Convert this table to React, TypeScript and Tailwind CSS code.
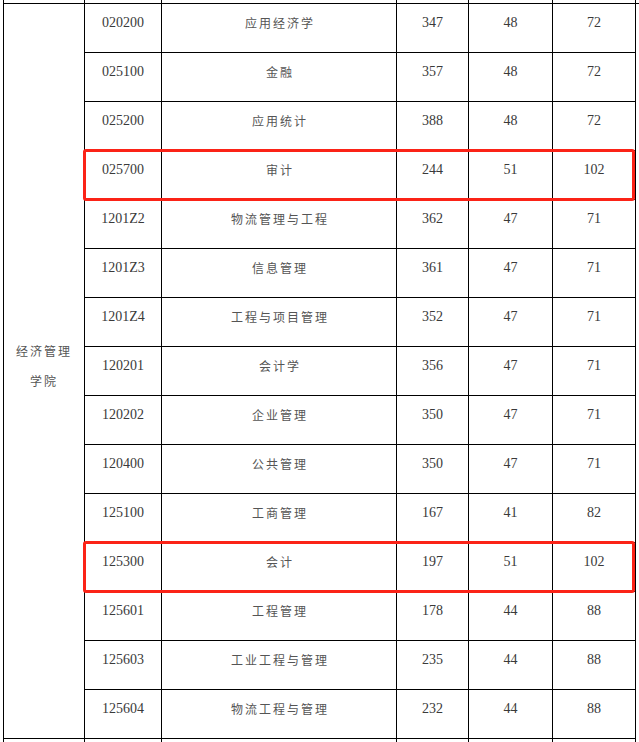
const cols = ["w-[81px]", "w-[77px]", "w-[235px]", "w-[72px]", "w-[84px]", "w-[83px]"]

const rows: [string, string, number, number, number][] = [
  ["020200", "应用经济学", 347, 48, 72],
  ["025100", "金融", 357, 48, 72],
  ["025200", "应用统计", 388, 48, 72],
  ["025700", "审计", 244, 51, 102],
  ["1201Z2", "物流管理与工程", 362, 47, 71],
  ["1201Z3", "信息管理", 361, 47, 71],
  ["1201Z4", "工程与项目管理", 352, 47, 71],
  ["120201", "会计学", 356, 47, 71],
  ["120202", "企业管理", 350, 47, 71],
  ["120400", "公共管理", 350, 47, 71],
  ["125100", "工商管理", 167, 41, 82],
  ["125300", "会计", 197, 51, 102],
  ["125601", "工程管理", 178, 44, 88],
  ["125603", "工业工程与管理", 235, 44, 88],
  ["125604", "物流工程与管理", 232, 44, 88],
]

const cjk = { fontFamily: '"Noto Sans CJK SC", sans-serif' }
const num = { fontFamily: '"Liberation Serif", serif' }

function Stub({ h }: { h: string }) {
  return (
    <div className={`flex border-l border-black ${h}`}>
      {cols.map((c, i) => (
        <div key={i} className={`${c} border-r border-black`} />
      ))}
    </div>
  )
}

export default function App() {
  return (
    <div className="relative w-[639px] h-[742px] overflow-hidden bg-white pl-[3px] text-[#3a3a3a]">
      <Stub h="h-[3px]" />
      <div className="flex border-l border-t border-black">
        <div
          className="w-[81px] border-r border-b border-black flex flex-col items-center justify-center pb-[10px] text-[12px] leading-[30px] tracking-[2px] text-[#555]"
          style={cjk}
        >
          <div>经济管理</div>
          <div>学院</div>
        </div>
        <div className="flex flex-col">
          {rows.map(([code, name, a, b, c]) => (
            <div key={code} className="flex h-[49px] border-b border-black text-center">
              <div className="w-[77px] border-r border-black pt-[12px] text-[14px] leading-[14px]" style={num}>
                {code}
              </div>
              <div
                className="w-[235px] border-r border-black pt-[12px] text-[12px] leading-[14px] tracking-[2px] pl-[2px] text-[#555]"
                style={cjk}
              >
                {name}
              </div>
              <div className="w-[72px] border-r border-black pt-[12px] text-[14px] leading-[14px]" style={num}>
                {a}
              </div>
              <div className="w-[84px] border-r border-black pt-[12px] text-[14px] leading-[14px]" style={num}>
                {b}
              </div>
              <div className="w-[83px] border-r border-black pt-[12px] text-[14px] leading-[14px]" style={num}>
                {c}
              </div>
            </div>
          ))}
        </div>
      </div>
      <Stub h="h-[10px]" />

      <div className="absolute left-[83px] top-[149px] w-[552px] h-[52px] border-[3px] border-[#fb2317] rounded-[3px]" />
      <div className="absolute left-[83px] top-[541px] w-[552px] h-[52px] border-[3px] border-[#fb2317] rounded-[3px]" />
    </div>
  )
}
